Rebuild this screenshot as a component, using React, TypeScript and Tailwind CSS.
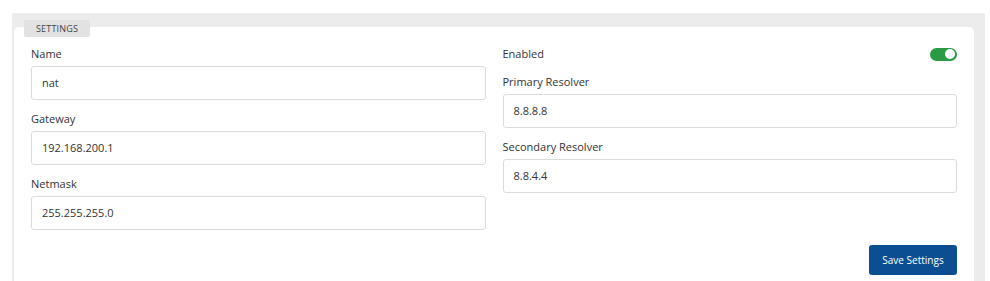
import React from "react";

function Field({ label, value }: { label: string; value: string }) {
  return (
    <div className="flex flex-col">
      <div className="h-[16px] leading-[16px] text-[11px] text-[#333] mb-[4px]">{label}</div>
      <div className="h-[34px] border border-[#dcdcdc] rounded-[3px] flex items-center px-[10px] text-[11px] text-[#333]">
        {value}
      </div>
    </div>
  );
}

export default function App() {
  return (
    <div
      className="w-[990px] h-[281px] bg-white pt-[13px] pl-[12px] overflow-hidden"
      style={{ fontFamily: '"Open Sans", "Noto Sans", sans-serif' }}
    >
      <div className="w-[973px] h-[290px] bg-[#ececed] pt-[14px] pl-[2px] pr-[11px] rounded-[2px]">
        <div className="relative bg-white rounded-[5px] h-[280px] pt-[19px] pl-[17px] pr-[17px]">
          <div className="absolute left-[10px] top-[-7px] w-[66px] h-[17px] bg-[#e2e2e3] rounded-[2px] flex items-center justify-center text-[9px] text-[#444] tracking-[0.2px]">
            SETTINGS
          </div>
          <div className="grid grid-cols-2 gap-x-[17px]">
            <div className="flex flex-col gap-[11px]">
              <Field label="Name" value="nat" />
              <Field label="Gateway" value="192.168.200.1" />
              <Field label="Netmask" value="255.255.255.0" />
            </div>
            <div className="flex flex-col">
              <div className="h-[16px] flex items-center justify-between mb-[12px]">
                <span className="text-[11px] text-[#333]">Enabled</span>
                <div className="w-[27px] h-[13px] rounded-full bg-[#2b9a45] relative">
                  <div className="absolute right-[2px] top-[1.5px] w-[10px] h-[10px] rounded-full bg-white" />
                </div>
              </div>
              <div className="flex flex-col gap-[11px]">
                <Field label="Primary Resolver" value="8.8.8.8" />
                <Field label="Secondary Resolver" value="8.8.4.4" />
              </div>
            </div>
          </div>
          <div className="flex justify-end mt-[15px]">
            <button className="w-[88px] h-[30px] bg-[#0b4f92] rounded-[3px] text-white text-[10px] font-medium">
              Save Settings
            </button>
          </div>
        </div>
      </div>
    </div>
  );
}
